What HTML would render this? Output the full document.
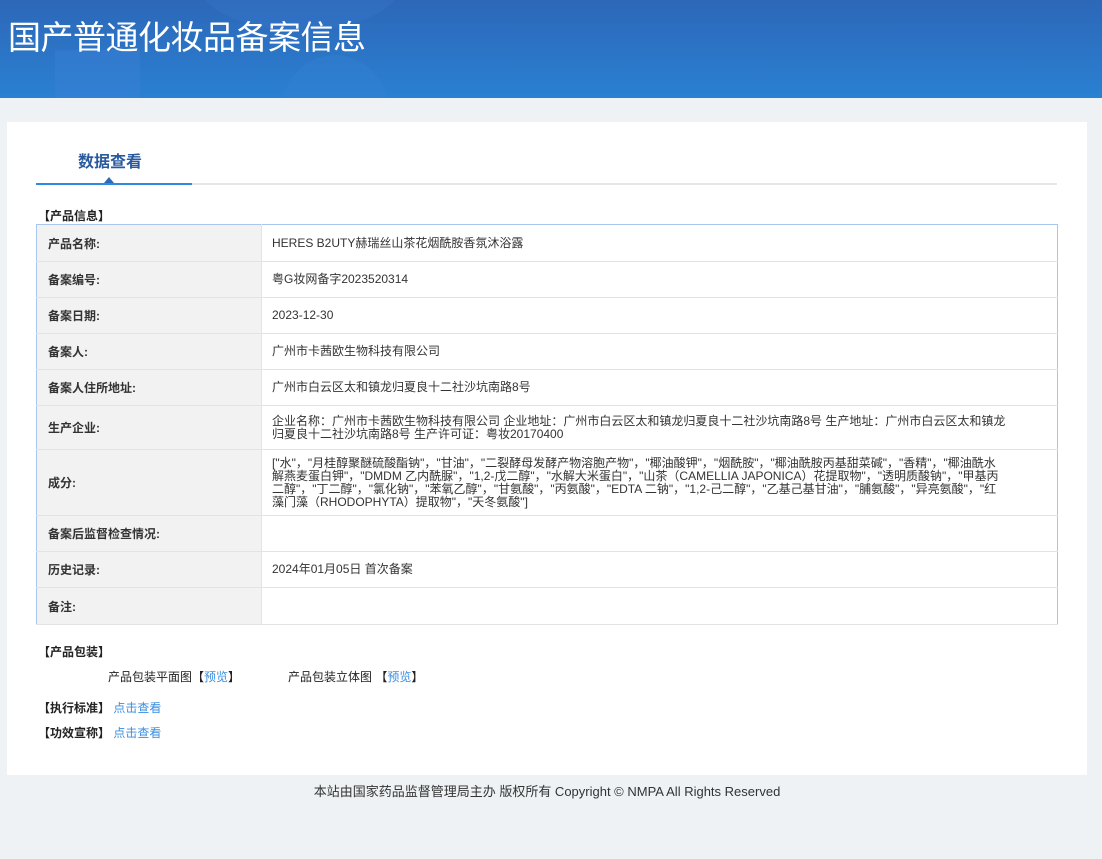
<!DOCTYPE html>
<html><head><meta charset="utf-8"><style>
*{margin:0;padding:0;box-sizing:border-box}
body{width:1102px;height:859px;background:#eef2f5;font-family:"Liberation Sans","Noto Sans CJK SC",sans-serif;color:#333;position:relative;overflow:hidden}
.hd{position:absolute;left:0;top:0;width:1102px;height:98px;background:linear-gradient(180deg,#2d67b8 0%,#2a80d2 100%);overflow:hidden}
.hd h1{position:absolute;left:8px;top:11px;font-size:33px;font-weight:normal;color:#fff;letter-spacing:-0.5px;font-family:"Noto Sans CJK SC",sans-serif}
.b1{position:absolute;left:55px;top:50px;width:85px;height:60px;background:#3d82d6;opacity:.4}
.b2{position:absolute;left:200px;top:-60px;width:200px;height:90px;border-radius:50%;background:#3a7ccc;opacity:.3}
.b3{position:absolute;left:280px;top:55px;width:110px;height:120px;border-radius:50%;background:#3584d4;opacity:.35}
.card{position:absolute;left:7px;top:122px;width:1080px;height:653px;background:#fff}
.tab{position:absolute;left:78px;top:148px;font-size:16px;font-weight:bold;color:#2a5a9e}
.ln{position:absolute;left:36px;top:183px;width:1021px;height:2px;background:#e6e6e6}
.ln2{position:absolute;left:36px;top:183px;width:156px;height:2px;background:#2b8ae2}
.tri{position:absolute;left:104px;top:177px;width:0;height:0;border-left:5px solid transparent;border-right:5px solid transparent;border-bottom:6px solid #2b6cb8}
.sec{position:absolute;font-size:12px;font-weight:bold;color:#222}
table{position:absolute;left:36px;top:224px;width:1022px;border-collapse:collapse;border:1px solid #a9c6ef;font-size:12px}
td{border-bottom:1px solid #e3e3e3;vertical-align:middle}
td.l{width:225px;background:#f2f2f2;font-weight:bold;padding-left:11px;color:#333;border-right:1px solid #e3e3e3}
td.v{padding-left:10px;padding-right:50px;line-height:13px;color:#333}
a{color:#3a8ee0;text-decoration:none}
.t{position:absolute;font-size:12px;color:#222}
.ft{position:absolute;top:781px;left:0;width:1094px;text-align:center;font-size:13px;color:#333}
</style></head><body>
<div class="hd"><div class="b1"></div><div class="b2"></div><div class="b3"></div><h1>国产普通化妆品备案信息</h1></div>
<div class="card"></div>
<div class="tab">数据查看</div>
<div class="ln"></div><div class="ln2"></div><div class="tri"></div>
<div class="sec" style="left:38px;top:207px">【产品信息】</div>
<table>
<tr style="height:37px"><td class="l">产品名称:</td><td class="v">HERES B2UTY赫瑞丝山茶花烟酰胺香氛沐浴露</td></tr>
<tr style="height:36px"><td class="l">备案编号:</td><td class="v">粤G妆网备字2023520314</td></tr>
<tr style="height:36px"><td class="l">备案日期:</td><td class="v">2023-12-30</td></tr>
<tr style="height:36px"><td class="l">备案人:</td><td class="v">广州市卡茜欧生物科技有限公司</td></tr>
<tr style="height:36px"><td class="l">备案人住所地址:</td><td class="v">广州市白云区太和镇龙归夏良十二社沙坑南路8号</td></tr>
<tr style="height:44px"><td class="l">生产企业:</td><td class="v">企业名称：广州市卡茜欧生物科技有限公司 企业地址：广州市白云区太和镇龙归夏良十二社沙坑南路8号 生产地址：广州市白云区太和镇龙归夏良十二社沙坑南路8号 生产许可证：粤妆20170400</td></tr>
<tr style="height:66px"><td class="l">成分:</td><td class="v">["水"，"月桂醇聚醚硫酸酯钠"，"甘油"，"二裂酵母发酵产物溶胞产物"，"椰油酸钾"，"烟酰胺"，"椰油酰胺丙基甜菜碱"，"香精"，"椰油酰水解燕麦蛋白钾"，"DMDM 乙内酰脲"，"1,2-戊二醇"，"水解大米蛋白"，"山茶（CAMELLIA JAPONICA）花提取物"，"透明质酸钠"，"甲基丙二醇"，"丁二醇"，"氯化钠"，"苯氧乙醇"，"甘氨酸"，"丙氨酸"，"EDTA 二钠"，"1,2-己二醇"，"乙基己基甘油"，"脯氨酸"，"异亮氨酸"，"红藻门藻（RHODOPHYTA）提取物"，"天冬氨酸"]</td></tr>
<tr style="height:36px"><td class="l">备案后监督检查情况:</td><td class="v"></td></tr>
<tr style="height:36px"><td class="l">历史记录:</td><td class="v">2024年01月05日 首次备案</td></tr>
<tr style="height:37px"><td class="l">备注:</td><td class="v"></td></tr>
</table>
<div class="sec" style="left:38px;top:643px">【产品包装】</div>
<div class="t" style="left:108px;top:668px">产品包装平面图【<a>预览</a>】</div>
<div class="t" style="left:288px;top:668px">产品包装立体图 【<a>预览</a>】</div>
<div class="sec" style="left:38px;top:699px">【执行标准】 <a style="font-weight:normal">点击查看</a></div>
<div class="sec" style="left:38px;top:724px">【功效宣称】 <a style="font-weight:normal">点击查看</a></div>
<div class="ft">本站由国家药品监督管理局主办 版权所有 Copyright © NMPA All Rights Reserved</div>
</body></html>
